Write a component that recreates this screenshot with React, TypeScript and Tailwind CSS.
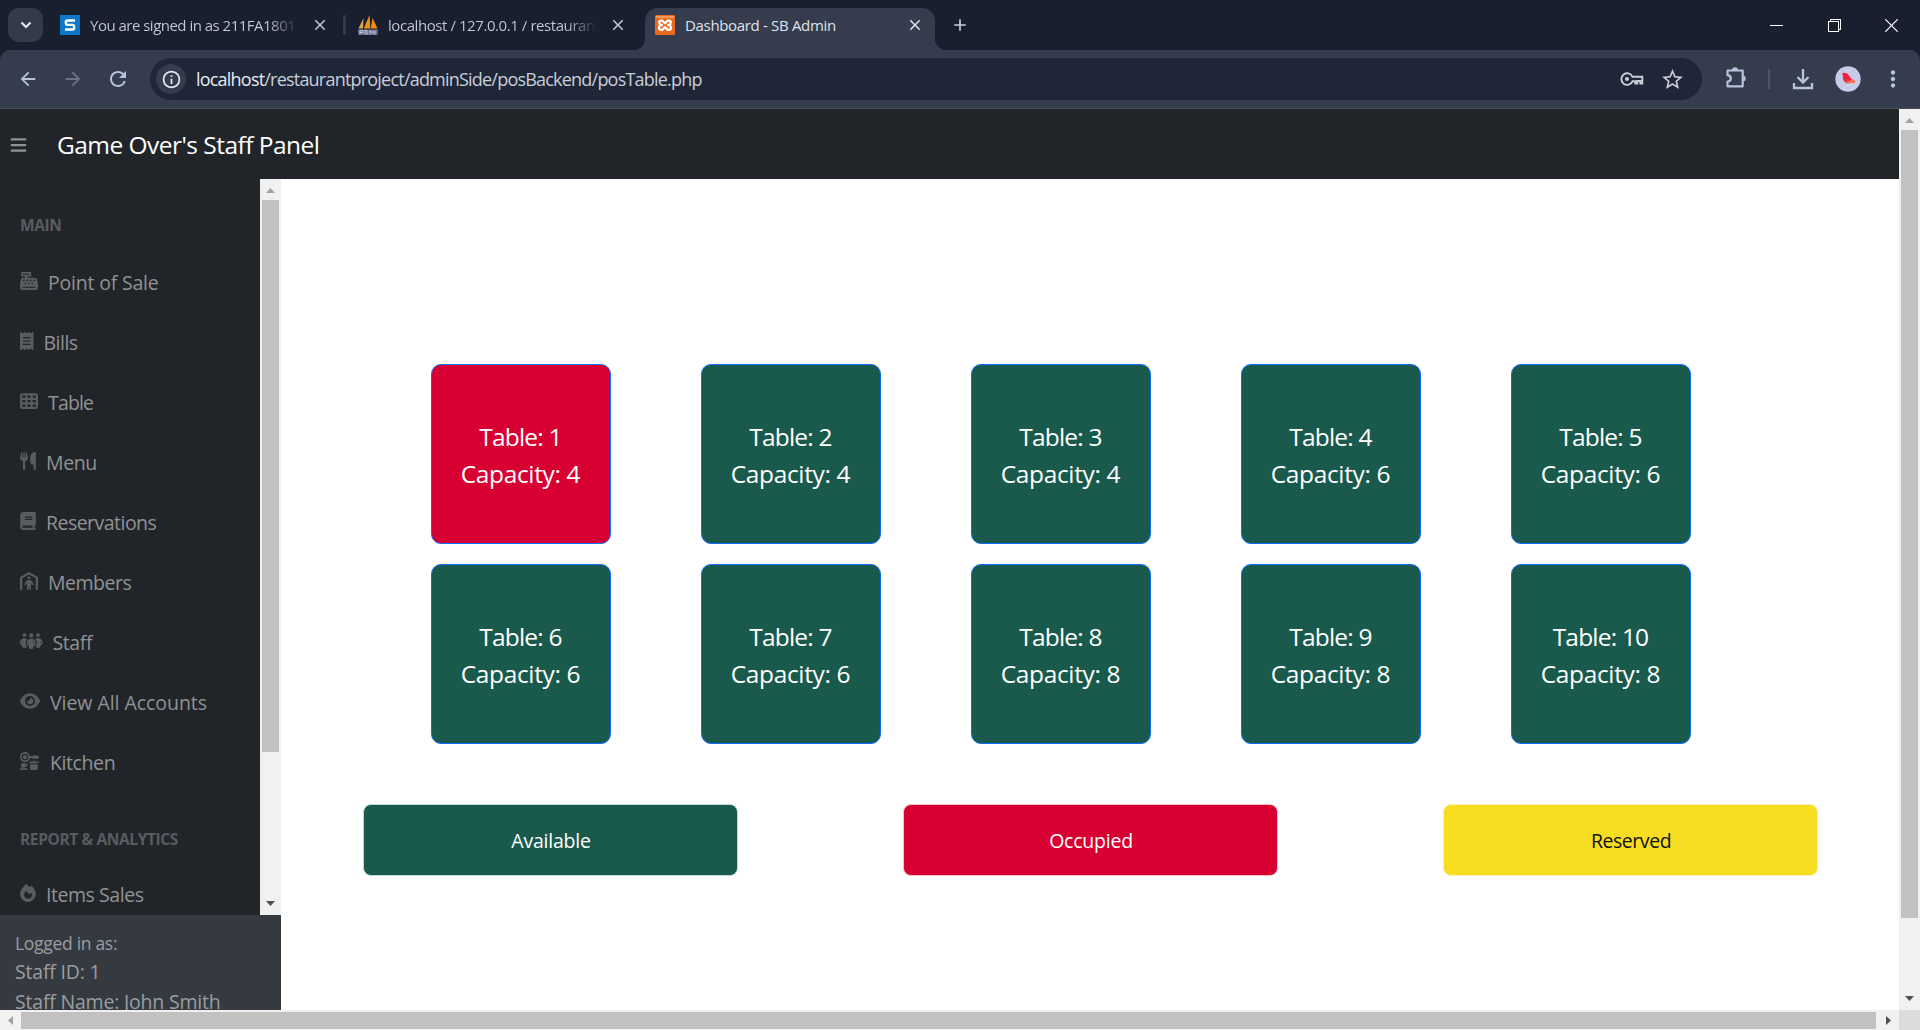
import type { ReactNode } from 'react'
import type { IconType } from 'react-icons'
import {
  FaBook,
  FaCashRegister,
  FaEye,
  FaFire,
  FaKitchenSet,
  FaPeopleGroup,
  FaPersonShelter,
  FaReceipt,
  FaTableCells,
  FaUtensils,
  FaBars,
} from 'react-icons/fa6'
import {
  MdArrowBack,
  MdArrowForward,
  MdClose,
  MdAdd,
  MdRefresh,
  MdInfoOutline,
  MdStarOutline,
  MdMoreVert,
} from 'react-icons/md'

type NavItem = { label: string; icon: IconType; iconClass: string; textClass: string }

const mainItems: NavItem[] = [
  { label: 'Point of Sale', icon: FaCashRegister, iconClass: 'w-[18px]', textClass: 'tracking-[-0.2px]' },
  { label: 'Bills', icon: FaReceipt, iconClass: 'w-[13.5px]', textClass: 'tracking-[-0.5px]' },
  { label: 'Table', icon: FaTableCells, iconClass: 'w-[18px]', textClass: 'tracking-[-0.85px]' },
  { label: 'Menu', icon: FaUtensils, iconClass: 'w-[16px]', textClass: 'tracking-[-0.4px]' },
  { label: 'Reservations', icon: FaBook, iconClass: 'w-[16px]', textClass: 'tracking-[-0.53px]' },
  { label: 'Members', icon: FaPersonShelter, iconClass: 'w-[18px]', textClass: 'tracking-[-0.5px]' },
  { label: 'Staff', icon: FaPeopleGroup, iconClass: 'w-[22.5px]', textClass: 'tracking-[-0.4px]' },
  { label: 'View All Accounts', icon: FaEye, iconClass: 'w-[20px]', textClass: 'tracking-[-0.05px]' },
  { label: 'Kitchen', icon: FaKitchenSet, iconClass: 'w-[20px]', textClass: 'tracking-[-0.4px]' },
]

const reportItems: NavItem[] = [
  { label: 'Items Sales', icon: FaFire, iconClass: 'w-[16px]', textClass: 'tracking-[-0.45px]' },
]

const tables = [4, 4, 4, 6, 6, 6, 6, 8, 8, 8].map((capacity, i) => ({
  id: i + 1,
  capacity,
  occupied: i === 0,
}))

function Tab({ icon, title }: { icon: ReactNode; title: ReactNode }) {
  return (
    <>
      {icon}
      <span className="ml-2.5 flex-1 overflow-hidden whitespace-nowrap text-[15px] leading-5">{title}</span>
      <MdClose className="size-[18px] shrink-0" />
    </>
  )
}

function SailIcon() {
  return (
    <svg viewBox="0 0 20 20" className="size-5 shrink-0">
      <path d="M.5 13.500 5.500 3 5 13.500z" fill="#dfa25a" />
      <path d="M5.800 13.500 11.500 0l.8 13.500z" fill="#f29111" />
      <path d="M12.800 13.500 14.500 3l5 10.500z" fill="#f58c14" />
      <path d="M0 14.500h20l-.5 5.500H.5z" fill="#6b6f92" />
      <path d="M2 19.500v-4h3v2H2m5 2v-4h2v4m3 0v-4l3 3v-3m2 0v4" fill="none" stroke="#c5c6dc" strokeWidth="1" />
    </svg>
  )
}

function XamppIcon() {
  return (
    <svg viewBox="0 0 20 20" className="size-5 shrink-0">
      <rect width="20" height="20" rx="1.5" fill="#ea6a1e" />
      <rect x="1" y="1" width="18" height="2" fill="#f29a62" />
      <path
        d="M4.300 7.200Q4.300 5.700 6 5.700H7.500L10 8.200 12.500 5.700H14Q15.700 5.700 15.700 7.500 15.700 9.500 14 10 15.900 10.500 15.900 12.700 15.900 14.800 14 14.800H12.800L10 12.200 7.200 14.800H6Q4.100 14.800 4.100 12.700 4.100 10.500 6 10 4.300 9.500 4.300 7.200zM6 10H7.800M12.200 10H14"
        fill="none"
        stroke="#fff"
        strokeWidth="2.300"
        strokeLinejoin="round"
      />
    </svg>
  )
}

function TabStrip() {
  return (
    <div className="flex h-[50px] bg-[#18202f] text-[#c3cbdd]">
      <div className="mt-2 ml-2 flex h-[34px] w-[35px] items-center justify-center rounded-[11px] bg-[#333b4b]">
        <svg viewBox="0 0 12 8" className="h-2 w-3">
          <path d="M1.500 1.500 6 6l4.500-4.500" fill="none" stroke="#e3e7f0" strokeWidth="2.200" />
        </svg>
      </div>
      <div className="ml-[17px] flex h-[50px] w-[269px] items-center">
        <Tab
          icon={
            <svg viewBox="0 0 20 20" className="size-5 shrink-0">
              <rect width="20" height="20" fill="#0b78c9" />
              <path
                d="M15 5.500H7.500Q5.800 5.500 5.800 7.600T7.500 9.900h5Q14.200 9.900 14.200 12.200T12.500 14.500H5"
                fill="none"
                stroke="#fff"
                strokeWidth="2.400"
              />
            </svg>
          }
          title={
            <span className="block w-[209px] bg-linear-to-r from-[#c3cbdd] from-85% to-transparent bg-clip-text tracking-[-0.51px] text-transparent">
              You are signed in as 211FA1801
            </span>
          }
        />
      </div>
      <div className="mt-[15px] ml-[14px] h-5 w-[3px] rounded bg-[#333b4b]" />
      <div className="ml-[12px] flex h-[50px] w-[269px] items-center">
        <Tab
          icon={<SailIcon />}
          title={
            <span className="block w-[209px] bg-linear-to-r from-[#c3cbdd] from-85% to-transparent bg-clip-text tracking-[-0.43px] text-transparent">
              localhost / 127.0.0.1 / restaurant
            </span>
          }
        />
      </div>
      <div className="relative ml-[18px] flex h-[50px] w-[290px] items-center rounded-t-[14px] pr-[11px] pl-[10px] text-[#dfe3ec]">
        <div className="absolute inset-x-0 top-[8px] bottom-0 rounded-t-[13px] bg-[#343c4d]" />
        <div className="absolute bottom-0 -left-3 h-3 w-3 bg-[radial-gradient(circle_at_0_0,#18202f_12px,#343c4d_12.500px)]" />
        <div className="absolute -right-3 bottom-0 h-3 w-3 bg-[radial-gradient(circle_at_100%_0,#18202f_12px,#343c4d_12.500px)]" />
        <div className="relative flex flex-1 items-center">
          <Tab icon={<XamppIcon />} title={<span className="tracking-[-0.33px]">Dashboard - SB Admin</span>} />
        </div>
      </div>
      <MdAdd className="mt-[15px] ml-[15px] size-5" />
      <div className="mr-[22px] ml-auto flex items-center gap-[44.5px] text-white">
        <svg viewBox="0 0 13 13" className="size-[13px]" shapeRendering="crispEdges">
          <path d="M0 6.500h13" stroke="currentColor" />
        </svg>
        <svg viewBox="0 0 13 13" className="size-[13px]" shapeRendering="crispEdges">
          <path d="M.5 2.500h10v10H.5zM2.500 2.500v-2h10v10h-2" fill="none" stroke="currentColor" />
        </svg>
        <svg viewBox="0 0 13 13" className="size-[13px]">
          <path d="m.3.3 12.400 12.400M12.700.3.300 12.700" stroke="currentColor" strokeWidth="1.200" />
        </svg>
      </div>
    </div>
  )
}

function Toolbar() {
  return (
    <div className="h-[59px] bg-[#18202f]">
      <div className="flex h-[59px] items-center rounded-t-[10px] border-b border-[#4b4e55] bg-[#343c4d] text-[#b7c3dc]">
        <MdArrowBack className="ml-[16.5px] size-[22px]" />
        <MdArrowForward className="ml-[23px] size-[22px] text-[#6b7386]" />
        <MdRefresh className="ml-[22px] size-[24px]" />
        <div className="ml-[20.5px] flex h-[42px] w-[1552px] items-center rounded-full bg-[#1e2637] text-[#c9ced9]">
          <div className="ml-1.5 flex size-[30px] items-center justify-center rounded-full bg-[#343c4d]">
            <MdInfoOutline className="size-[21px] text-[#e3e7f0]" />
          </div>
          <span className="mt-px ml-2.5 text-[18px] tracking-[-0.79px] whitespace-nowrap">
            <span className="text-[#e8ebf2]">localhost</span>/restaurantproject/adminSide/posBackend/posTable.php
          </span>
          <svg viewBox="0 0 24 14" className="ml-auto h-[14px] w-6">
            <path
              d="M12.500 4.800H22.300v6.700h-2V9h-3v2.500h-2V9.300h-2.800A5.800 5.800 0 1 1 12.500 4.800z"
              fill="none"
              stroke="currentColor"
              strokeWidth="1.900"
            />
            <circle cx="7" cy="7" r="2.100" fill="currentColor" />
          </svg>
          <MdStarOutline className="mr-[17px] ml-[16px] size-[25px]" />
        </div>
        <svg viewBox="0 0 22 22" className="mb-0.5 ml-[23px] size-[22px]">
          <path
            d="M2.500 3.500h15.200v15.800H2.500v-4.700q3.300-.400 3.300-3.200T2.500 8.200z"
            fill="none"
            stroke="currentColor"
            strokeWidth="2.200"
            strokeLinejoin="round"
          />
          <path d="M7 3a3 2.700 0 0 1 6 0zM18 8.500a2.700 3 0 0 1 0 6z" fill="currentColor" />
        </svg>
        <div className="ml-[21px] h-5 w-0.5 bg-[#4c566b]" />
        <svg viewBox="0 0 22 22" className="ml-[22px] size-[22px]">
          <path d="M11 1v13M5.500 9l5.500 5.500L16.500 9M2 15v5h18v-5" fill="none" stroke="currentColor" strokeWidth="2.300" />
        </svg>
        <svg viewBox="0 0 26 26" className="ml-[20.5px] size-[26px]">
          <circle cx="13" cy="13" r="12.700" fill="#c5cbe9" />
          <path d="M7 7.500c2-1.500 5-1 6.500 1.500l3 4 3.500 2-1 2-3.500-.500-3 1C9 16.500 7.500 13 8 10z" fill="#f0243c" />
          <path d="M11 14.500c2.500 1.500 4 0 5.500-1.500l4 2.500-1 2-3.500-.800-3.500 1z" fill="#ff7058" />
          <path d="M13 18v2" stroke="#f0dfe0" strokeWidth="1.200" />
        </svg>
        <MdMoreVert className="ml-[19px] size-[26px]" />
      </div>
    </div>
  )
}

function Arrow({ dir, muted }: { dir: 'up' | 'down' | 'left' | 'right'; muted?: boolean }) {
  const paths = { up: 'M0 7 4.500 2 9 7z', down: 'M0 2h9L4.500 7z', left: 'M7 0v9L2 4.500z', right: 'M2 0v9l5-4.500z' }
  return (
    <svg viewBox="0 0 9 9" className="size-[9px]">
      <path d={paths[dir]} fill={muted ? '#a3a3a3' : '#505050'} />
    </svg>
  )
}

function VerticalScrollbar({ thumb }: { thumb: string }) {
  return (
    <div className="flex w-[21px] shrink-0 flex-col items-center bg-[#f1f1f1]">
      <div className="flex h-[21px] items-center pt-0.5">
        <Arrow dir="up" muted />
      </div>
      <div className={`w-[17px] bg-[#c1c1c1] ${thumb}`} />
      <div className="mt-auto flex h-[23px] items-center">
        <Arrow dir="down" />
      </div>
    </div>
  )
}

function NavRow({ item }: { item: NavItem }) {
  const Icon = item.icon
  return (
    <div className="flex h-[60px] items-center px-5">
      <Icon className={`mb-[3px] h-[18px] shrink-0 text-[#595c5f] ${item.iconClass}`} />
      <span className={`mt-0.5 ml-2.5 text-[19.5px] whitespace-nowrap text-[#909294] ${item.textClass}`}>
        {item.label}
      </span>
    </div>
  )
}

function Sidebar() {
  return (
    <aside className="flex w-[281px] shrink-0 flex-col bg-[#212529]">
      <div className="flex h-[736px]">
        <nav className="h-full flex-1 overflow-hidden">
          <div className="flex h-[73px] items-end px-5 pb-[17px] text-[15.5px] leading-5 font-bold tracking-[-0.4px] text-[#595c5f]">
            MAIN
          </div>
          {mainItems.map((item) => (
            <NavRow key={item.label} item={item} />
          ))}
          <div className="flex h-[72px] items-end px-5 pb-[15px] text-[15.5px] leading-5 font-bold tracking-[-0.38px] text-[#595c5f]">
            REPORT &amp; ANALYTICS
          </div>
          {reportItems.map((item) => (
            <NavRow key={item.label} item={item} />
          ))}
        </nav>
        <VerticalScrollbar thumb="h-[552px]" />
      </div>
      <div className="h-[95px] overflow-hidden bg-[#343a40] px-[15px] pt-[15px] text-[#9a9da0]">
        <div className="text-[17.5px] leading-[27px] tracking-[-0.3px]">Logged in as:</div>
        <div className="text-[19.5px] leading-[30px] tracking-[-0.2px]">Staff ID: 1</div>
        <div className="text-[19.5px] leading-[30px] tracking-[-0.2px] whitespace-nowrap">Staff Name: John Smith</div>
      </div>
    </aside>
  )
}

function Content() {
  return (
    <main className="min-w-0 flex-1 bg-white pt-[185px] pl-[82px]">
      <div className="ml-[68px] grid w-max grid-cols-5 gap-x-[90px] gap-y-5">
        {tables.map((t) => (
          <div
            key={t.id}
            className={`flex size-[180px] flex-col items-center justify-center rounded-[10px] border border-[#0d6efd] pt-[2px] text-[24.5px] leading-[37px] text-white ${
              t.occupied ? 'bg-[#d80032]' : 'bg-[#1a5a4c]'
            }`}
          >
            <span className="mr-px tracking-[-0.8px]">Table: {t.id}</span>
            <span className="mr-px tracking-[-0.35px]">Capacity: {t.capacity}</span>
          </div>
        ))}
      </div>
      <div className="mt-[60px] flex gap-[165px] text-[19.5px] tracking-[-0.23px]">
        <div className="flex h-[72px] w-[375px] items-center justify-center rounded-[8px] border border-[#badbcc] bg-[#1a5a4c] pt-0.5 pl-px text-white">
          Available
        </div>
        <div className="flex h-[72px] w-[375px] items-center justify-center rounded-[8px] border border-[#f5c2c7] bg-[#d80032] pt-0.5 pl-px text-white">
          Occupied
        </div>
        <div className="flex h-[72px] w-[375px] items-center justify-center rounded-[8px] border border-[#ffecb5] bg-[#f7de22] pt-0.5 pl-px tracking-[-0.45px] text-[#111]">
          Reserved
        </div>
      </div>
    </main>
  )
}

export default function App() {
  return (
    <div className="flex h-[1030px] w-[1920px] flex-col overflow-hidden bg-white font-['Open_Sans','Noto_Sans',sans-serif]">
      <TabStrip />
      <Toolbar />
      <div className="flex h-[901px]">
        <div className="flex min-w-0 flex-1 flex-col">
          <header className="flex h-[70px] items-center bg-[#212529]">
            <FaBars className="mt-0.5 ml-[10px] h-[18px] w-[17px] text-[#8d9390]" />
            <h1 className="mt-0.5 ml-[30px] text-[24.5px] tracking-[-0.53px] text-white">Game Over's Staff Panel</h1>
          </header>
          <div className="flex h-[831px]">
            <Sidebar />
            <Content />
          </div>
        </div>
        <VerticalScrollbar thumb="h-[788px]" />
      </div>
      <div className="flex h-5 items-center bg-[#f1f1f1]">
        <div className="flex w-[21px] justify-center">
          <Arrow dir="left" muted />
        </div>
        <div className="h-[17px] w-[1855px] bg-[#c1c1c1]" />
        <div className="flex w-[23px] justify-center pl-0.5">
          <Arrow dir="right" />
        </div>
        <div className="h-5 w-[21px] bg-[#dcdcdc]" />
      </div>
    </div>
  )
}
